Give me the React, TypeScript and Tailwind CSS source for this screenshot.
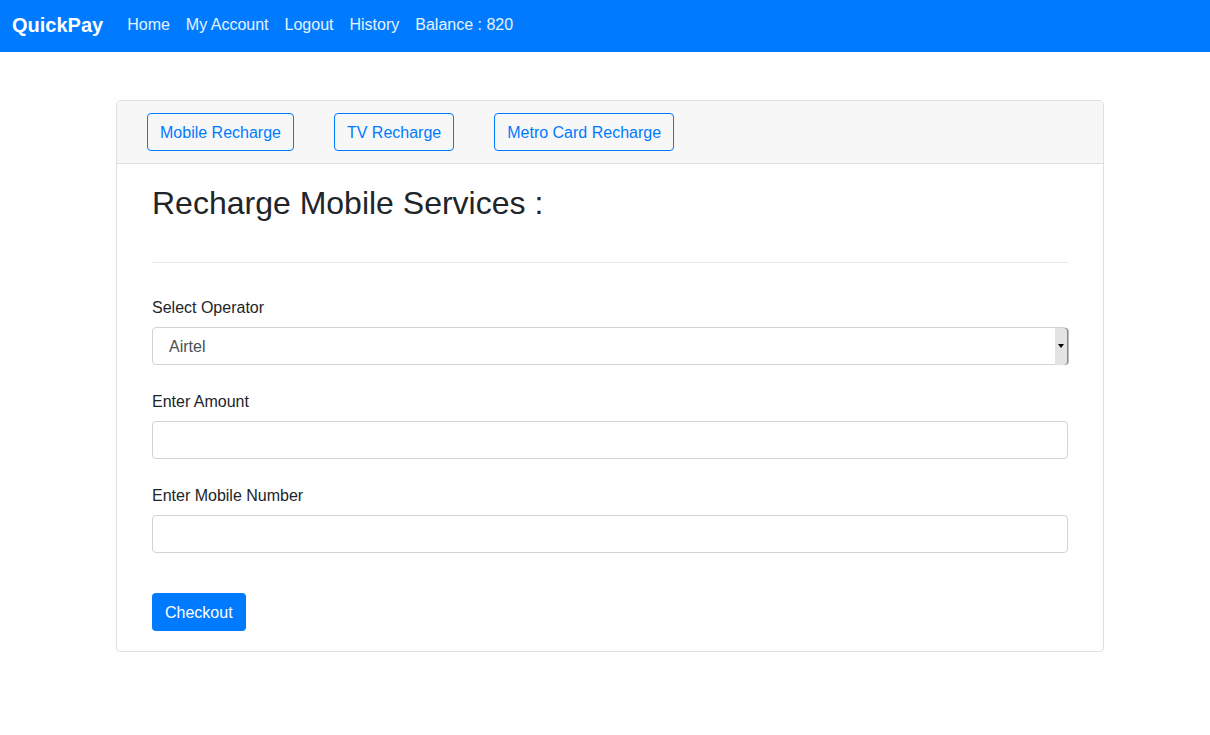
import React from "react";

const App = () => {
  const [operator, setOperator] = React.useState("Airtel");
  const [amount, setAmount] = React.useState("");
  const [mobile, setMobile] = React.useState("");

  const tabs = ["Mobile Recharge", "TV Recharge", "Metro Card Recharge"];
  const links = ["Home", "My Account", "Logout", "History", "Balance : 820"];

  return (
    <div className="min-h-screen bg-white font-['Liberation_Sans',Arial,sans-serif] text-[#212529]">
      <nav className="flex h-[52px] items-center bg-[#007bff] px-3 pb-0.5">
        <span className="mr-4 text-[20px] font-bold text-white">QuickPay</span>
        {links.map((link) => (
          <a key={link} className="px-2 text-[16px] text-white/90">
            {link}
          </a>
        ))}
      </nav>

      <div className="ml-[116px] mt-12 w-[988px] rounded border border-[#dfdfdf]">
        <div className="flex gap-10 border-b border-[#dfdfdf] bg-[#f7f7f7] px-[30px] py-3">
          {tabs.map((tab) => (
            <button
              key={tab}
              type="button"
              className="h-[38px] rounded border border-[#007bff] px-3 pt-0.5 text-[16px] text-[#007bff]"
            >
              {tab}
            </button>
          ))}
        </div>

        <div className="px-[35px] pb-5 pt-5">
          <h2 className="text-[32px] leading-[38px]">Recharge Mobile Services :</h2>
          <hr className="mt-10 border-[#e9e9e9]" />

          <form onSubmit={(e) => e.preventDefault()} className="mt-8 flex flex-col gap-6">
            <div className="flex flex-col gap-[7px]">
              <label className="pt-px text-[16px] leading-6">Select Operator</label>
              <div className="relative flex h-[38px] items-center rounded border border-[#ced4da] bg-white">
                <span className="pl-4 pt-0.5 text-[16px] text-[#495057]">{operator}</span>
                <div className="ml-auto flex h-[37px] w-[12px] items-center justify-center rounded-r-sm bg-[#e3e3e3] shadow-[1px_0_0_#8a8a8a,2px_0_0_#b9b9b9]">
                  <svg width="6" height="4" viewBox="0 0 6 4">
                    <path d="M0 0 H6 L3 4 Z" fill="#000" />
                  </svg>
                </div>
                <select
                  value={operator}
                  onChange={(e) => setOperator(e.target.value)}
                  className="absolute inset-0 opacity-0"
                >
                  <option>Airtel</option>
                  <option>Jio</option>
                  <option>Vodafone</option>
                </select>
              </div>
            </div>

            <div className="flex flex-col gap-[7px]">
              <label className="pt-px text-[16px] leading-6">Enter Amount</label>
              <input
                value={amount}
                onChange={(e) => setAmount(e.target.value)}
                className="h-[38px] rounded border border-[#ced4da] px-3 text-[16px]"
              />
            </div>

            <div className="flex flex-col gap-[7px]">
              <label className="pt-px text-[16px] leading-6">Enter Mobile Number</label>
              <input
                value={mobile}
                onChange={(e) => setMobile(e.target.value)}
                className="h-[38px] rounded border border-[#ced4da] px-3 text-[16px]"
              />
            </div>

            <div className="pt-4">
              <button
                type="submit"
                className="h-[38px] rounded bg-[#007bff] px-[13px] pt-0.5 text-[16px] text-white"
              >
                Checkout
              </button>
            </div>
          </form>
        </div>
      </div>
    </div>
  );
};

export default App;
